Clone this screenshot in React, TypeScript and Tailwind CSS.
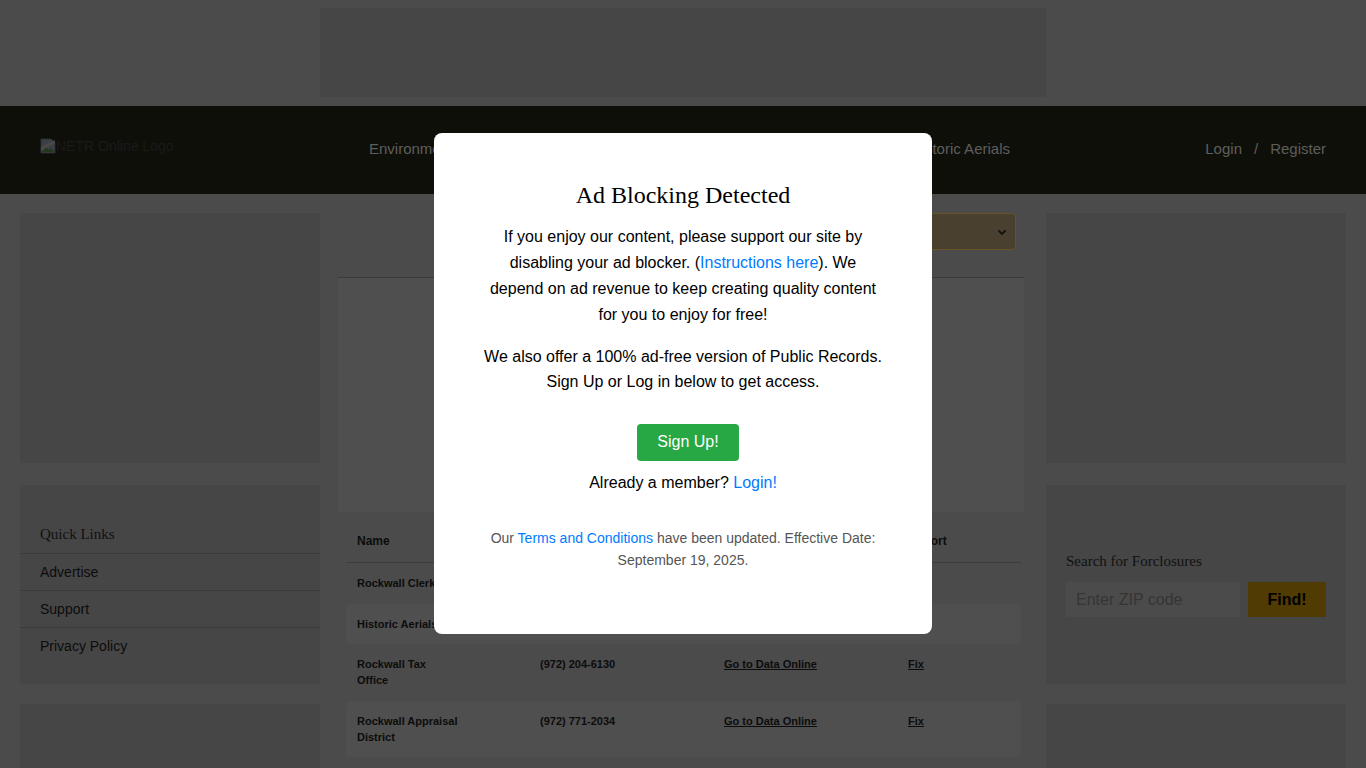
import React from 'react';

// The page sits behind the ad-block dialog, so it is painted in its dimmed colours.

const rows = [
  { name: 'Rockwall Clerk', phone: '(972) 204-6200', link: 'Go to Data Online', striped: false },
  { name: 'Historic Aerials', phone: '', link: 'Go to Data Online', striped: true },
  { name: 'Rockwall Tax Office', phone: '(972) 204-6130', link: 'Go to Data Online', striped: false },
  { name: 'Rockwall Appraisal District', phone: '(972) 771-2034', link: 'Go to Data Online', striped: true },
];

function BrokenImage() {
  return (
    <svg width="16" height="16" viewBox="0 0 16 16" className="shrink-0">
      <path d="M1 1h10l4 4v10H1z" fill="#3c4047" stroke="#2a2e33" strokeWidth="1" />
      <path d="M2 14l4-5 3 3 2-2 3 4z" fill="#22381c" />
      <path d="M1 9l14-7v3L1 13z" fill="#4a4a4a" opacity="0.9" />
    </svg>
  );
}

function Header() {
  return (
    <header className="h-[88px] bg-[#0f0f0a] flex items-center pl-10 pr-10 text-[15px]">
      <div className="w-[329px] flex items-center -mt-2 text-[14px] text-[#1a1a1a]">
        <BrokenImage />
        <span>NETR Online Logo</span>
      </div>
      <nav className="w-[641px] -mt-[2px] flex justify-between text-[#5e5e5c]">
        <a>Environmental</a>
        <a>Property Records</a>
        <a>Public Records</a>
        <a>Historic Aerials</a>
      </nav>
      <div className="ml-auto -mt-[2px] flex items-center text-[#5e5e5c]">
        <a>Login</a>
        <span className="mx-3">/</span>
        <a>Register</a>
      </div>
    </header>
  );
}

function QuickLinks() {
  return (
    <div className="bg-[#464646] h-[199px] pt-[40px]">
      <div className="px-5 pb-[10px] border-b border-[#3a3a3a] font-['Liberation_Serif',serif] text-[15px] text-[#111] leading-[18px]">
        Quick Links
      </div>
      {['Advertise', 'Support', 'Privacy Policy'].map((item, i) => (
        <div
          key={item}
          className={`h-[37px] px-5 flex items-center text-[14px] text-[#0c0c0c] ${i < 2 ? 'border-b border-[#3a3a3a]' : ''}`}
        >
          {item}
        </div>
      ))}
    </div>
  );
}

function ForeclosureSearch() {
  return (
    <div className="bg-[#464646] h-[199px] px-5 flex flex-col justify-center">
      <div className="font-['Liberation_Serif',serif] text-[15px] text-[#111] leading-[18px] mb-[12px]">
        Search for Forclosures
      </div>
      <div className="flex gap-2">
        <input
          placeholder="Enter ZIP code"
          className="w-[174px] h-[35px] bg-[#4b4b4b] px-[10px] text-[16px] placeholder:text-[#353535] outline-none"
        />
        <button className="flex-1 h-[35px] bg-[#503c03] text-[16px] font-bold text-black">Find!</button>
      </div>
    </div>
  );
}

function RecordsTable() {
  return (
    <div className="ml-2 mr-[3px] text-[11px] font-bold text-[#0c0c0c]">
      <div className="grid grid-cols-[184px_184px_184px_1fr] h-[43px] items-center border-b border-[#3c3c3c] text-[12px]">
        <div className="pl-[11px]">Name</div>
        <div className="pl-[10px]">Phone</div>
        <div className="pl-[10px]">Online</div>
        <div className="pl-[10px]">Report</div>
      </div>
      {rows.map((r) => (
        <div
          key={r.name}
          className={`grid grid-cols-[184px_184px_184px_1fr] py-3 leading-4 rounded-sm ${r.striped ? 'bg-[#4f4f4f] mt-[1px]' : ''}`}
        >
          <div className="pl-[11px]">
            <div className="w-[102px]">{r.name}</div>
          </div>
          <div className="pl-[10px]">{r.phone}</div>
          <div className="pl-[10px]">
            <a className="underline">{r.link}</a>
          </div>
          <div className="pl-[10px]">
            <a className="underline">Fix</a>
          </div>
        </div>
      ))}
    </div>
  );
}

function AdBlockModal() {
  return (
    <div className="fixed inset-0 z-40 flex justify-center items-start pt-[133px]">
      <div className="w-[498px] h-[501px] bg-white rounded-lg pt-[48px] text-center text-black">
        <h2 className="font-['Liberation_Serif',serif] text-[24px] leading-[1.2]">Ad Blocking Detected</h2>
        <div className="w-[400px] mx-auto mt-[14px] text-[16px]">
          <p className="leading-[26px]">
            If you enjoy our content, please support our site by disabling your ad blocker. (
            <a className="text-[#007bff]">Instructions here</a>). We depend on ad revenue to keep creating quality
            content for you to enjoy for free!
          </p>
          <p className="mt-4 leading-[25px]">
            We also offer a 100% ad-free version of Public Records. Sign Up or Log in below to get access.
          </p>
          <button className="mt-[30px] ml-[10px] h-[37px] px-5 bg-[#28a745] text-white rounded-[4px] text-[16px]">
            Sign Up!
          </button>
          <p className="mt-[9px] leading-[1.6]">
            Already a member? <a className="text-[#007bff]">Login!</a>
          </p>
          <p className="mt-[32px] text-[14px] leading-[22px] text-[#555]">
            Our <a className="text-[#007bff]">Terms and Conditions</a> have been updated. Effective Date: September 19,
            2025.
          </p>
        </div>
      </div>
    </div>
  );
}

export default function App() {
  return (
    <div className="h-[768px] overflow-hidden bg-[#4b4b4b] font-['Liberation_Sans',Arial,sans-serif]">
      {/* Top banner ad */}
      <div className="h-[106px] flex justify-center pt-2">
        <div className="w-[726px] h-[89px] bg-[#464646]" />
      </div>

      <Header />

      <div className="flex px-5 pt-[19px]">
        {/* Left sidebar */}
        <aside className="w-[300px] shrink-0 flex flex-col gap-[22px]">
          <div className="h-[250px] bg-[#464646]" />
          <QuickLinks />
          <div className="h-[200px] bg-[#464646] -mt-[2px]" />
        </aside>

        {/* Center */}
        <main className="w-[686px] shrink-0 ml-[18px]">
          <div className="flex justify-end pr-2">
            <div className="w-[300px] h-[37px] rounded-[4px] border border-[#66532a] bg-[#4a4030] flex items-center justify-end pr-[8px]">
              <svg width="10" height="10" viewBox="0 0 10 10">
                <path d="M1.5 3.5L5 7l3.5-3.5" stroke="#111" strokeWidth="1.8" fill="none" />
              </svg>
            </div>
          </div>
          <div className="mt-[27px] border-t border-[#3a3a3a]" />
          <div className="h-[234px] bg-[#4f4f4f]" />
          <div className="mt-[8px]">
            <RecordsTable />
          </div>
        </main>

        {/* Right sidebar */}
        <aside className="w-[300px] shrink-0 ml-[22px] flex flex-col gap-[22px]">
          <div className="h-[250px] bg-[#464646]" />
          <ForeclosureSearch />
          <div className="h-[200px] bg-[#464646] -mt-[2px]" />
        </aside>
      </div>

      <AdBlockModal />
    </div>
  );
}
